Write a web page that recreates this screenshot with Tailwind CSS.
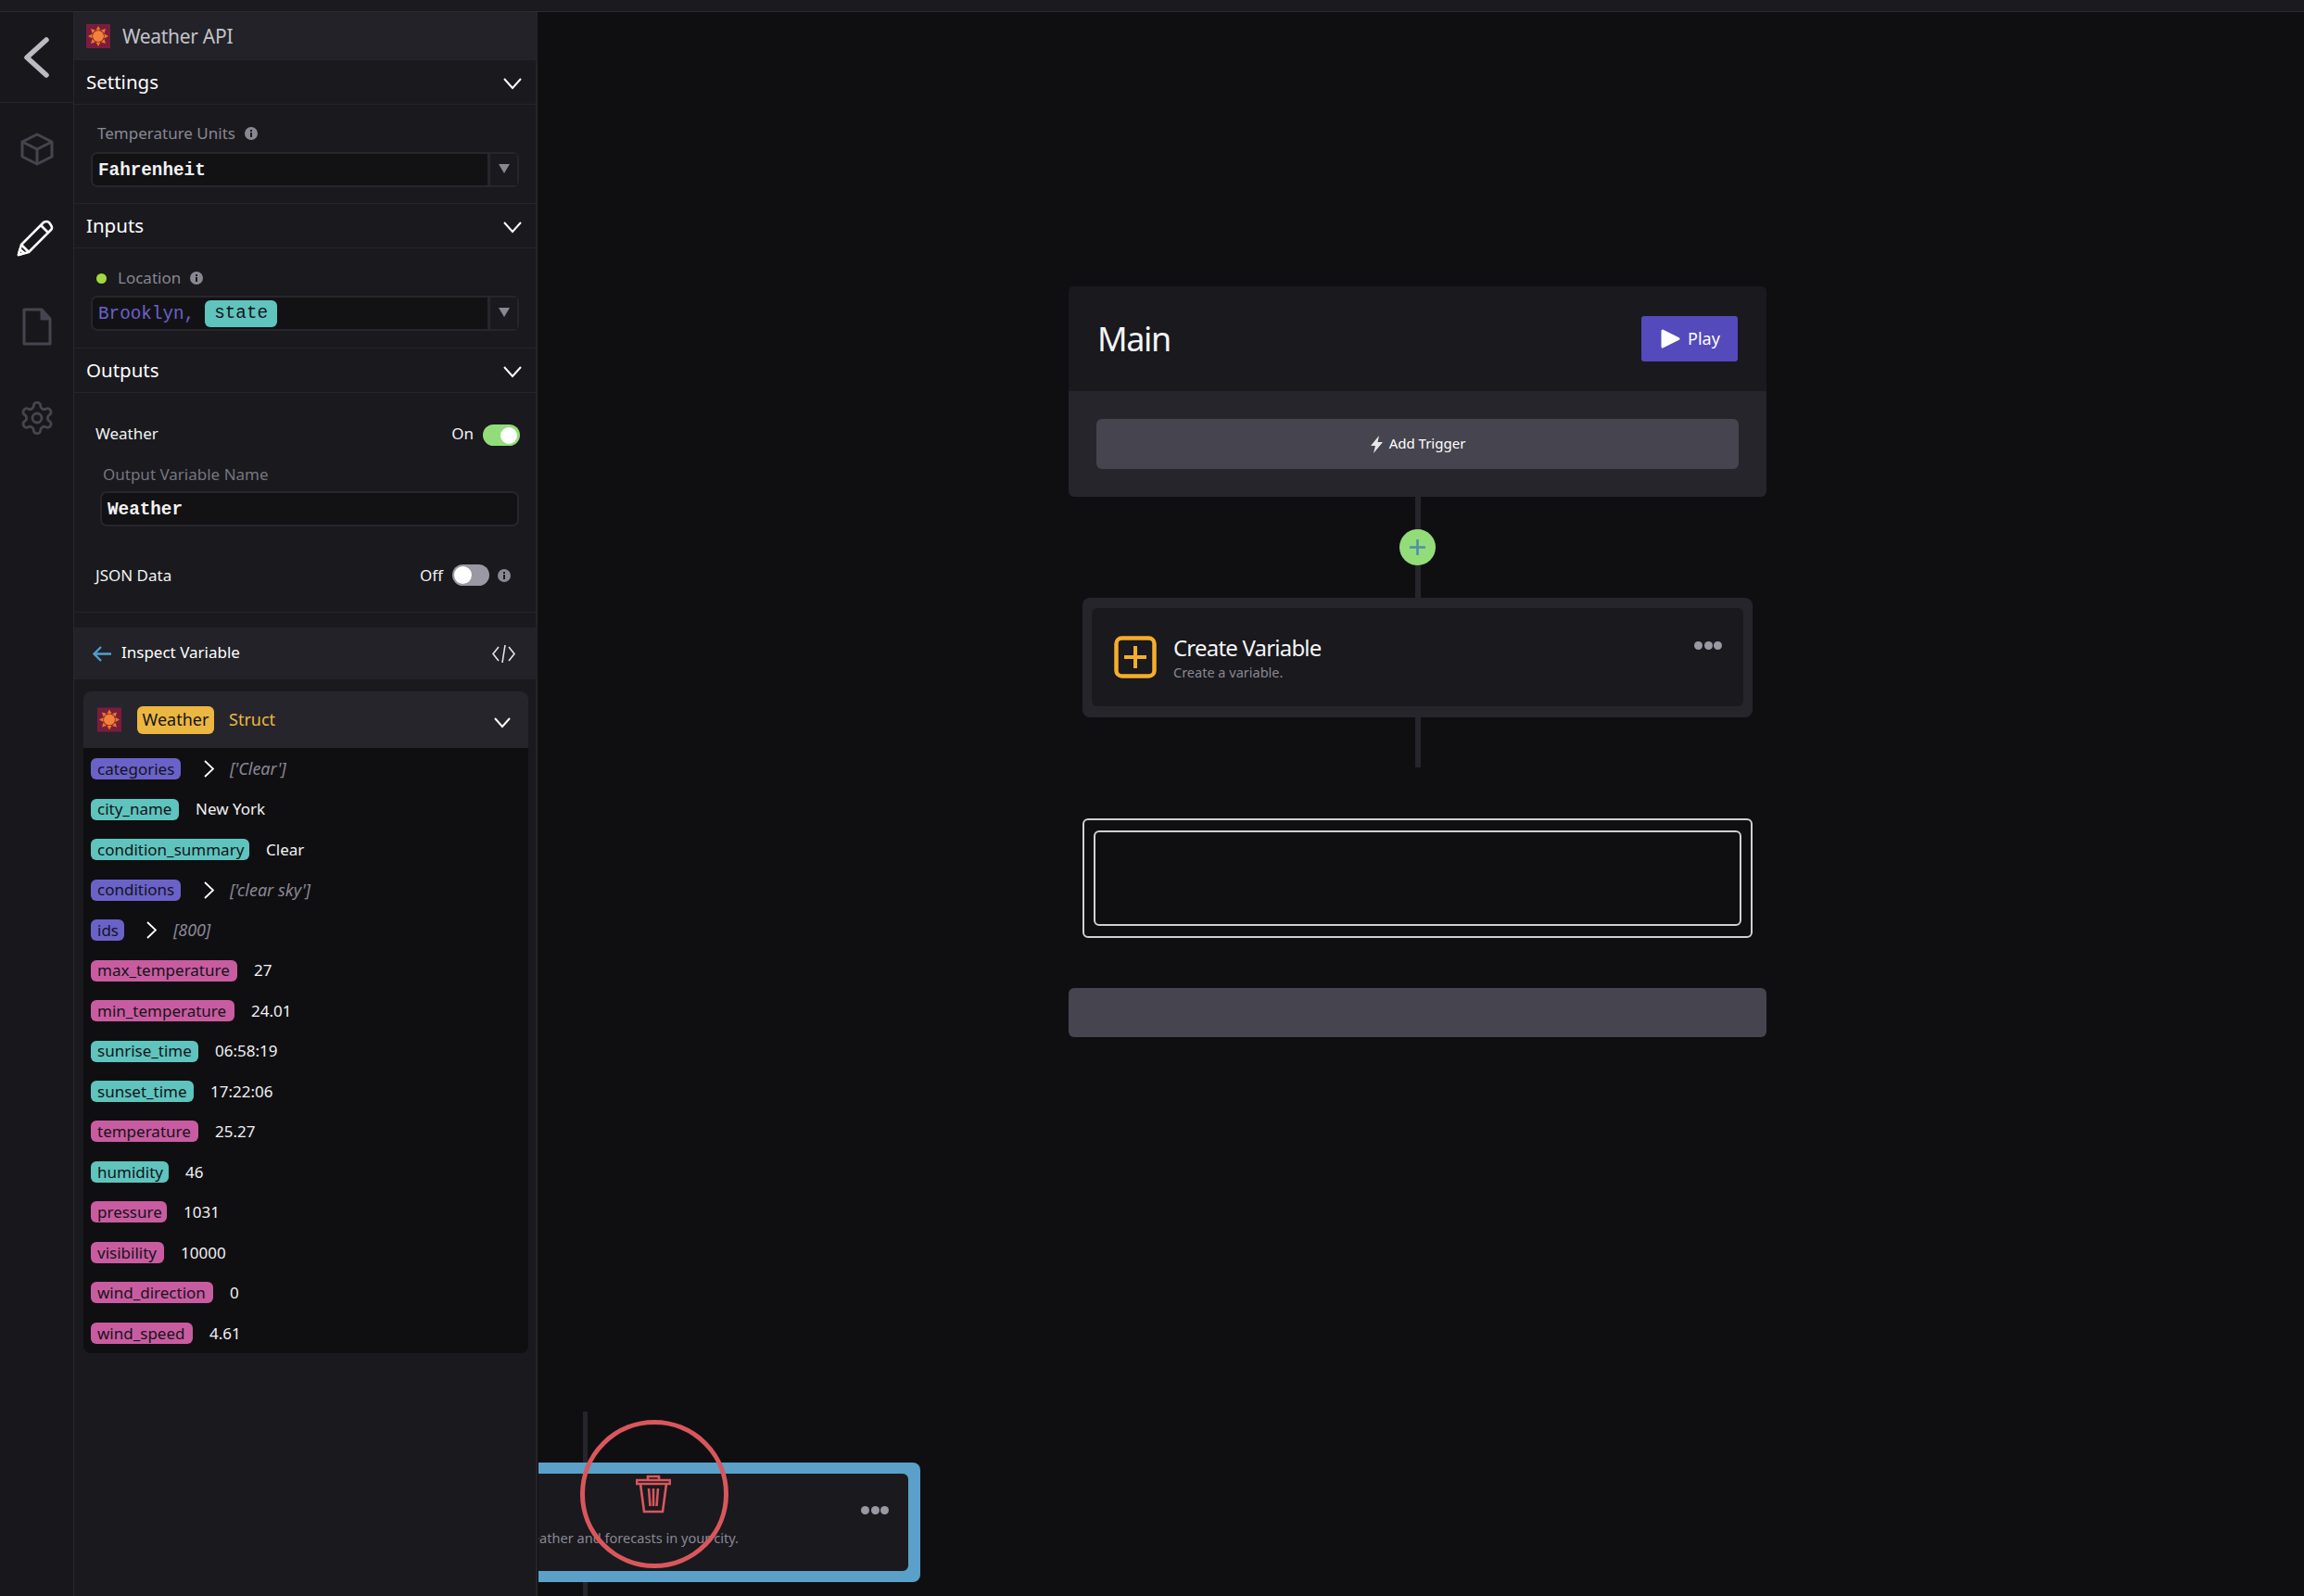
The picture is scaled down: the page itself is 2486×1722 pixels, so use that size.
<!DOCTYPE html>
<html lang="en">
<head>
  <meta charset="UTF-8" />
  <title>Weather API</title>
  <script src="https://cdn.jsdelivr.net/npm/@tailwindcss/browser@4"></script>
</head>
<body class="h-[1722px] overflow-hidden bg-[#0f0f12] font-['Noto_Sans',sans-serif] text-white">

  <!-- top bar -->
  <div class="h-[13px] bg-[#1a1a1f] border-b border-[#2a2a30]"></div>

  <div class="flex h-[1709px]">

    <!-- icon rail -->
    <div class="w-[80px] shrink-0 flex flex-col bg-[#18181c] border-r border-[#26262c]">
      <div class="h-[98px] flex items-center justify-center border-b border-[#26262c]">
        <svg class="w-[30px] h-[46px] ml-[-2px]" viewBox="0 0 30 46" fill="none" stroke="#bcbac2" stroke-width="5.5" stroke-linecap="round" stroke-linejoin="round"><path d="M26 4 L5 23 L26 42" /></svg>
      </div>
      <div class="h-[96.5px] mt-[2px] flex items-center justify-center">
        <svg class="w-[38px] h-[36px]" viewBox="0 0 38 36" fill="none" stroke="#46444e" stroke-width="3" stroke-linejoin="round"><path d="M19 2 L35 10 V26 L19 34 L3 26 V10 Z" /><path d="M3 10 L19 18 L35 10 M19 18 V34" /></svg>
      </div>
      <div class="h-[96.5px] flex items-center justify-center">
        <svg class="w-[40px] h-[40px] ml-[-4px] mt-[-2px]" viewBox="0 0 40 40" fill="none" stroke="#ffffff" stroke-width="2.6" stroke-linejoin="round"><path d="M2 38 L5 27 L29 3 Q32 1 35 3 L37 6 Q39 9 37 11 L13 35 Z" /><path d="M5 27 L13 35 M26 6 L34 14 M2 38 L3.5 32 L8 36 Z" /></svg>
      </div>
      <div class="h-[96.5px] flex items-center justify-center">
        <svg class="w-[32px] h-[41px] mt-[-3px]" viewBox="0 0 32 41" fill="none" stroke="#46444e" stroke-width="3" stroke-linejoin="round"><path d="M2 2 H21 L30 12 V39 H2 Z" /><path d="M21 2 V12 H30" fill="#46444e" /></svg>
      </div>
      <div class="h-[96.5px] flex items-center justify-center">
        <svg class="w-[40px] h-[40px]" viewBox="0 0 24 24" fill="none" stroke="#46444e" stroke-width="1.7" stroke-linecap="round" stroke-linejoin="round"><path d="M12.22 2h-.44a2 2 0 0 0-2 2v.18a2 2 0 0 1-1 1.73l-.43.25a2 2 0 0 1-2 0l-.15-.08a2 2 0 0 0-2.73.73l-.22.38a2 2 0 0 0 .73 2.73l.15.1a2 2 0 0 1 1 1.72v.51a2 2 0 0 1-1 1.74l-.15.09a2 2 0 0 0-.73 2.73l.22.38a2 2 0 0 0 2.73.73l.15-.08a2 2 0 0 1 2 0l.43.25a2 2 0 0 1 1 1.73V20a2 2 0 0 0 2 2h.44a2 2 0 0 0 2-2v-.18a2 2 0 0 1 1-1.73l.43-.25a2 2 0 0 1 2 0l.15.08a2 2 0 0 0 2.73-.73l.22-.39a2 2 0 0 0-.73-2.73l-.15-.08a2 2 0 0 1-1-1.74v-.5a2 2 0 0 1 1-1.74l.15-.09a2 2 0 0 0 .73-2.73l-.22-.38a2 2 0 0 0-2.73-.73l-.15.08a2 2 0 0 1-2 0l-.43-.25a2 2 0 0 1-1-1.73V4a2 2 0 0 0-2-2z" /><circle cx="12" cy="12" r="3" /></svg>
      </div>
    </div>

    <!-- sidebar -->
    <div class="w-[500px] shrink-0 bg-[#19191e] border-r-2 border-[#24242a]">
      <div class="h-[52px] flex items-center gap-[13px] pl-[13px] bg-[#222228]">
        <svg class="w-[26px] h-[26px]" viewBox="0 0 26 26"><rect width="26" height="26" fill="#7a1c3e" /><g fill="#e8791f"><path d="M13 2 L15.5 6.5 H10.5 Z M13 24 L15.5 19.5 H10.5 Z M2 13 L6.5 10.5 V15.5 Z M24 13 L19.5 10.5 V15.5 Z M5 5 L10 6.5 L6.5 10 Z M21 5 L16 6.5 L19.500 10 Z M5 21 L10 19.500 L6.500 16 Z M21 21 L16 19.500 L19.500 16 Z" /></g><circle cx="13" cy="13" r="6" fill="#f2813a" /></svg>
        <span class="text-[21px] tracking-[-0.3px] text-[#c4c2ca] leading-none">Weather API</span>
      </div>

      <!-- settings -->
      <div class="h-[48px] flex items-center justify-between pl-[13px] pr-[14px] border-b border-[#24242a]">
        <span class="text-[20.500px] leading-none">Settings</span>
        <svg class="w-[22px] h-[14px] mt-[3px]" viewBox="0 0 22 14" fill="none" stroke="#ffffff" stroke-width="2"><path d="M2 2 L11 12 L20 2" /></svg>
      </div>
      <div class="h-[107px] border-b border-[#24242a] pl-[18px] pr-[18px]">
        <div class="h-[51px] flex items-center gap-[10px] pl-[7px] pt-[11px] text-[17px] text-[#8a8792]">
          Temperature Units
          <svg class="w-[14px] h-[14px]" viewBox="0 0 14 14"><circle cx="7" cy="7" r="7" fill="#8a8792" /><rect x="6" y="3" width="2" height="2" fill="#19191e" /><rect x="6" y="6" width="2" height="5" fill="#19191e" /></svg>
        </div>
        <div class="h-[38px] flex items-stretch rounded-[7px] border-2 border-[#26262c] bg-[#121215]">
          <div class="flex-1 flex items-center pl-[6px] pt-[2px] font-['Liberation_Mono',monospace] font-bold text-[19.300px] text-[#f2f2f2]">Fahrenheit</div>
          <div class="w-[32px] bg-[#19191e] border-l-[3px] border-[#26262c] flex items-center justify-center"><svg class="w-[12px] h-[10px] mb-[3px]" viewBox="0 0 12 10"><path d="M0 0 H12 L6 10 Z" fill="#8a8792" /></svg></div>
        </div>
      </div>

      <!-- inputs -->
      <div class="h-[48px] flex items-center justify-between pl-[13px] pr-[14px] border-b border-[#24242a]">
        <span class="text-[20.500px] leading-none">Inputs</span>
        <svg class="w-[22px] h-[14px] mt-[3px]" viewBox="0 0 22 14" fill="none" stroke="#ffffff" stroke-width="2"><path d="M2 2 L11 12 L20 2" /></svg>
      </div>
      <div class="h-[108px] border-b border-[#24242a] pl-[18px] pr-[18px]">
        <div class="h-[51px] flex items-center pl-[6px] pt-[13px] text-[17px] text-[#8a8792]">
          <span class="w-[11px] h-[11px] rounded-full bg-[#a3d93c] mr-[12px]"></span>
          Location
          <svg class="w-[14px] h-[14px] ml-[10px]" viewBox="0 0 14 14"><circle cx="7" cy="7" r="7" fill="#8a8792" /><rect x="6" y="3" width="2" height="2" fill="#19191e" /><rect x="6" y="6" width="2" height="5" fill="#19191e" /></svg>
        </div>
        <div class="h-[38px] flex items-stretch rounded-[7px] border-2 border-[#26262c] bg-[#121215]">
          <div class="flex-1 flex items-center pl-[6px] pt-[1px] font-['Liberation_Mono',monospace] text-[19.300px] text-[#6a62c9]">
            <span class="pt-[1px]">Brooklyn,</span>
            <span class="ml-[11px] h-[29px] w-[78px] rounded-[6px] bg-[#5fc4bd] text-[#14141a] flex items-center justify-center">state</span>
          </div>
          <div class="w-[32px] bg-[#19191e] border-l-[3px] border-[#26262c] flex items-center justify-center"><svg class="w-[12px] h-[10px] mb-[3px]" viewBox="0 0 12 10"><path d="M0 0 H12 L6 10 Z" fill="#8a8792" /></svg></div>
        </div>
      </div>

      <!-- outputs -->
      <div class="h-[48px] flex items-center justify-between pl-[13px] pr-[14px] border-b border-[#24242a]">
        <span class="text-[20.500px] leading-none">Outputs</span>
        <svg class="w-[22px] h-[14px] mt-[3px]" viewBox="0 0 22 14" fill="none" stroke="#ffffff" stroke-width="2"><path d="M2 2 L11 12 L20 2" /></svg>
      </div>
      <div class="h-[237px] border-b border-[#24242a] pt-[34px] pl-[23px] pr-[18px]">
        <div class="h-[23px] flex items-center justify-between text-[17px] text-[#f2f2f2]">
          <span class="mt-[-3px]">Weather</span>
          <div class="flex items-center gap-[10px] mr-[-1px]">
            <span class="mt-[-3px]">On</span>
            <div class="w-[40px] h-[23px] rounded-full bg-[#92dd7a] flex items-center justify-end pr-[3px]"><span class="w-[18px] h-[18px] rounded-full bg-white"></span></div>
          </div>
        </div>
        <div class="h-[22px] mt-[20px] ml-[8px] flex items-center text-[17px] text-[#77757f]">Output Variable Name</div>
        <div class="h-[38px] mt-[7px] ml-[5px] flex items-center pl-[6px] pt-[2px] rounded-[7px] border-2 border-[#26262c] bg-[#121215] font-['Liberation_Mono',monospace] font-bold text-[19.300px] text-[#f2f2f2]">Weather</div>
        <div class="h-[23px] mt-[41px] flex items-center justify-between text-[17px] text-[#f2f2f2]">
          JSON Data
          <div class="flex items-center gap-[9px] pr-[9px]">
            <span class="mr-[1px]">Off</span>
            <div class="w-[40px] h-[23px] rounded-full bg-[#9a98a2] flex items-center pl-[2px]"><span class="w-[19px] h-[19px] rounded-full bg-white"></span></div>
            <svg class="w-[14px] h-[14px]" viewBox="0 0 14 14"><circle cx="7" cy="7" r="7" fill="#8a8792" /><rect x="6" y="3" width="2" height="2" fill="#19191e" /><rect x="6" y="6" width="2" height="5" fill="#19191e" /></svg>
          </div>
        </div>
      </div>

      <!-- inspect variable -->
      <div class="h-[56px] mt-[16px] flex items-center justify-between pl-[19px] pr-[22px] bg-[#222228]">
        <div class="flex items-center gap-[11px] text-[17px]">
          <svg class="w-[21px] h-[19px]" viewBox="0 0 21 19" fill="none" stroke="#4f9fcb" stroke-width="2.4"><path d="M21 9.500 H3 M10 2 L2.500 9.500 L10 17" /></svg>
          <span class="mt-[-3px]">Inspect Variable</span>
        </div>
        <svg class="w-[25px] h-[21px]" viewBox="0 0 25 21" fill="none" stroke="#e4e4e8" stroke-width="1.6"><path d="M7 3 L1 10.500 L7 18 M18 3 L24 10.500 L18 18 M14 1 L11 20" /></svg>
      </div>

      <div class="mx-[10px] mt-[13px] w-[480px] rounded-[8px] overflow-hidden bg-[#0f0f12]">
        <div class="h-[61px] flex items-center bg-[#26252c] pl-[15px] pr-[18px] text-[18px]">
          <svg class="w-[26px] h-[27px]" viewBox="0 0 26 26"><rect width="26" height="26" fill="#7a1c3e" /><g fill="#e8791f"><path d="M13 2 L15.5 6.5 H10.5 Z M13 24 L15.5 19.5 H10.5 Z M2 13 L6.5 10.5 V15.5 Z M24 13 L19.5 10.5 V15.5 Z M5 5 L10 6.5 L6.5 10 Z M21 5 L16 6.5 L19.500 10 Z M5 21 L10 19.500 L6.500 16 Z M21 21 L16 19.500 L19.500 16 Z" /></g><circle cx="13" cy="13" r="6" fill="#f2813a" /></svg>
          <span class="ml-[17px] w-[83px] h-[30px] rounded-[6px] bg-[#ecb740] text-[#14141a] flex items-center justify-center">Weather</span>
          <span class="ml-[16px] text-[#ecb740]">Struct</span>
          <svg class="w-[20px] h-[13px] ml-auto mt-[6px]" viewBox="0 0 20 13" fill="none" stroke="#ffffff" stroke-width="2"><path d="M2 2 L10 11 L18 2" /></svg>
        </div>
        <div class="pl-[8px] pt-[1px] text-[17px] text-[#f2f2f2]">
          <div class="h-[43.47px] flex items-center"><span class="w-[97px] h-[23px] rounded-[6px] bg-[#6a62c9] text-[#14141a] flex items-center pl-[7px] whitespace-nowrap">categories</span><svg class="w-[11px] h-[19px] ml-[25px]" viewBox="0 0 11 19" fill="none" stroke="#ffffff" stroke-width="1.800"><path d="M1 1 L10 9.500 L1 18" /></svg><span class="ml-[17px] italic text-[18px] text-[#8a8792]">['Clear']</span></div>
          <div class="h-[43.47px] flex items-center"><span class="w-[95px] h-[23px] rounded-[6px] bg-[#5fc4bd] text-[#14141a] flex items-center pl-[7px] whitespace-nowrap">city_name</span><span class="ml-[18px]">New York</span></div>
          <div class="h-[43.47px] flex items-center"><span class="w-[171px] h-[23px] rounded-[6px] bg-[#5fc4bd] text-[#14141a] flex items-center pl-[7px] whitespace-nowrap">condition_summary</span><span class="ml-[18px]">Clear</span></div>
          <div class="h-[43.47px] flex items-center"><span class="w-[97px] h-[23px] rounded-[6px] bg-[#6a62c9] text-[#14141a] flex items-center pl-[7px] whitespace-nowrap">conditions</span><svg class="w-[11px] h-[19px] ml-[25px]" viewBox="0 0 11 19" fill="none" stroke="#ffffff" stroke-width="1.800"><path d="M1 1 L10 9.500 L1 18" /></svg><span class="ml-[17px] italic text-[18px] text-[#8a8792]">['clear sky']</span></div>
          <div class="h-[43.47px] flex items-center"><span class="w-[36px] h-[23px] rounded-[6px] bg-[#6a62c9] text-[#14141a] flex items-center pl-[7px] whitespace-nowrap">ids</span><svg class="w-[11px] h-[19px] ml-[24px]" viewBox="0 0 11 19" fill="none" stroke="#ffffff" stroke-width="1.800"><path d="M1 1 L10 9.500 L1 18" /></svg><span class="ml-[18px] italic text-[18px] text-[#8a8792]">[800]</span></div>
          <div class="h-[43.47px] flex items-center"><span class="w-[158px] h-[23px] rounded-[6px] bg-[#c95ca0] text-[#14141a] flex items-center pl-[7px] whitespace-nowrap">max_temperature</span><span class="ml-[18px]">27</span></div>
          <div class="h-[43.47px] flex items-center"><span class="w-[155px] h-[23px] rounded-[6px] bg-[#c95ca0] text-[#14141a] flex items-center pl-[7px] whitespace-nowrap">min_temperature</span><span class="ml-[18px]">24.01</span></div>
          <div class="h-[43.47px] flex items-center"><span class="w-[116px] h-[23px] rounded-[6px] bg-[#5fc4bd] text-[#14141a] flex items-center pl-[7px] whitespace-nowrap">sunrise_time</span><span class="ml-[18px]">06:58:19</span></div>
          <div class="h-[43.47px] flex items-center"><span class="w-[111px] h-[23px] rounded-[6px] bg-[#5fc4bd] text-[#14141a] flex items-center pl-[7px] whitespace-nowrap">sunset_time</span><span class="ml-[18px]">17:22:06</span></div>
          <div class="h-[43.47px] flex items-center"><span class="w-[116px] h-[23px] rounded-[6px] bg-[#c95ca0] text-[#14141a] flex items-center pl-[7px] whitespace-nowrap">temperature</span><span class="ml-[18px]">25.27</span></div>
          <div class="h-[43.47px] flex items-center"><span class="w-[84px] h-[23px] rounded-[6px] bg-[#5fc4bd] text-[#14141a] flex items-center pl-[7px] whitespace-nowrap">humidity</span><span class="ml-[18px]">46</span></div>
          <div class="h-[43.47px] flex items-center"><span class="w-[82px] h-[23px] rounded-[6px] bg-[#c95ca0] text-[#14141a] flex items-center pl-[7px] whitespace-nowrap">pressure</span><span class="ml-[18px]">1031</span></div>
          <div class="h-[43.47px] flex items-center"><span class="w-[79px] h-[23px] rounded-[6px] bg-[#c95ca0] text-[#14141a] flex items-center pl-[7px] whitespace-nowrap">visibility</span><span class="ml-[18px]">10000</span></div>
          <div class="h-[43.47px] flex items-center"><span class="w-[132px] h-[23px] rounded-[6px] bg-[#c95ca0] text-[#14141a] flex items-center pl-[7px] whitespace-nowrap">wind_direction</span><span class="ml-[18px]">0</span></div>
          <div class="h-[43.47px] flex items-center"><span class="w-[110px] h-[23px] rounded-[6px] bg-[#c95ca0] text-[#14141a] flex items-center pl-[7px] whitespace-nowrap">wind_speed</span><span class="ml-[18px]">4.61</span></div>
        </div>
      </div>
    </div>

    <!-- canvas -->
    <div class="relative flex-1 overflow-hidden">
      <div class="ml-[573px] mt-[296px] w-[753px] flex flex-col items-center">

        <div class="w-full rounded-[6px] overflow-hidden bg-[#26252c]">
          <div class="h-[113px] flex items-center justify-between pl-[31px] pr-[31px] bg-[#19191e]">
            <span class="text-[36px] tracking-[-1.4px] leading-none text-[#f5f5f5]">Main</span>
            <div class="w-[104px] h-[49px] rounded-[3px] bg-[#544abb] flex items-center pl-[20px] gap-[7px] text-[18px]">
              <svg class="w-[23px] h-[23px]" viewBox="0 0 23 23"><path d="M3 3 L20 11.500 L3 20 Z" fill="#ffffff" stroke="#ffffff" stroke-width="3" stroke-linejoin="round" /></svg>
              Play
            </div>
          </div>
          <div class="h-[114px] px-[30px] pt-[30px]">
            <div class="h-[54px] rounded-[6px] bg-[#46444e] flex items-center justify-center gap-[6px] text-[15px]">
              <svg class="w-[15px] h-[19px]" viewBox="0 0 15 19"><path d="M10 0 L1 11 H6 L4 19 L14 7 H8.500 Z" fill="#e8e8ea" /></svg>
              <span class="mt-[-2px]">Add Trigger</span>
            </div>
          </div>
        </div>

        <div class="relative w-[6px] h-[109px] bg-[#26252c]">
          <div class="absolute left-[-16.500px] top-[35px] w-[39px] h-[39px] rounded-full bg-[#92dd7a] flex items-center justify-center">
            <svg class="w-[19px] h-[19px]" viewBox="0 0 19 19" fill="none" stroke="#4f8fa8" stroke-width="2.600"><path d="M9.500 1 V18 M1 9.500 H18" /></svg>
          </div>
        </div>

        <div class="w-[723px] h-[129px] rounded-[8px] bg-[#26252c] px-[10px] pt-[11px]">
          <div class="relative h-[106px] rounded-[6px] bg-[#19191e] flex items-center pl-[24px]">
            <svg class="w-[46px] h-[46px]" viewBox="0 0 46 46" fill="none" stroke="#f6ad2b"><rect x="2.500" y="2.500" width="41" height="41" rx="6" stroke-width="4.500" /><path d="M23 11 V35 M11 23 H35" stroke-width="4" /></svg>
            <div class="ml-[18px]">
              <div class="text-[24px] tracking-[-0.8px] leading-[30px] text-[#f5f5f5]">Create Variable</div>
              <div class="text-[14.500px] leading-[20px] mt-[1px] text-[#8a8792]">Create a variable.</div>
            </div>
            <div class="absolute right-[23px] top-[36px] flex gap-[1.500px]">
              <span class="w-[9px] h-[9px] rounded-full bg-[#9a98a2]"></span><span class="w-[9px] h-[9px] rounded-full bg-[#9a98a2]"></span><span class="w-[9px] h-[9px] rounded-full bg-[#9a98a2]"></span>
            </div>
          </div>
        </div>

        <div class="w-[6px] h-[54px] bg-[#26252c]"></div>

        <div class="mt-[55px] w-[723px] h-[129px] rounded-[6px] border-2 border-[#d0d0d0] px-[10px] py-[11px]">
          <div class="h-full rounded-[6px] border-2 border-[#d0d0d0]"></div>
        </div>

        <div class="mt-[54px] w-full h-[53px] rounded-[6px] bg-[#46444e]"></div>
      </div>

      <!-- dragged block -->
      <div class="absolute left-[49px] top-[1510px] w-[5px] h-[199px] bg-[#26252c]"></div>
      <div class="absolute left-[1px] top-[1565px] w-[412px] h-[129px] rounded-r-[8px] bg-[#5aa0c8] py-[12px] pr-[13px]">
        <div class="relative h-full rounded-r-[6px] bg-[#19191e] overflow-hidden">
          <div class="absolute right-[183px] top-[59px] whitespace-nowrap text-[14.600px] text-[#8a8792]">Get the current weather and forecasts in your city.</div>
          <div class="absolute right-[21px] top-[35px] flex gap-[1.500px]">
            <span class="w-[9px] h-[9px] rounded-full bg-[#9a98a2]"></span><span class="w-[9px] h-[9px] rounded-full bg-[#9a98a2]"></span><span class="w-[9px] h-[9px] rounded-full bg-[#9a98a2]"></span>
          </div>
        </div>
      </div>
      <div class="absolute left-[46px] top-[1519px] w-[160px] h-[160px] rounded-full border-[5px] border-[#d9575c] flex items-start justify-center pt-[55px]">
        <svg class="w-[38px] h-[42px] mt-[-1px] ml-[-2px]" viewBox="0 0 38 42" fill="none" stroke="#d9575c" stroke-width="2.600"><path d="M1 6 H37 V10 H1 Z M13 6 V2 H25 V6 M5 10 L9 40 H29 L33 10 M14 15 L15.500 34 M19 15 V34 M24 15 L22.500 34" /></svg>
      </div>
    </div>
  </div>
</body>
</html>
